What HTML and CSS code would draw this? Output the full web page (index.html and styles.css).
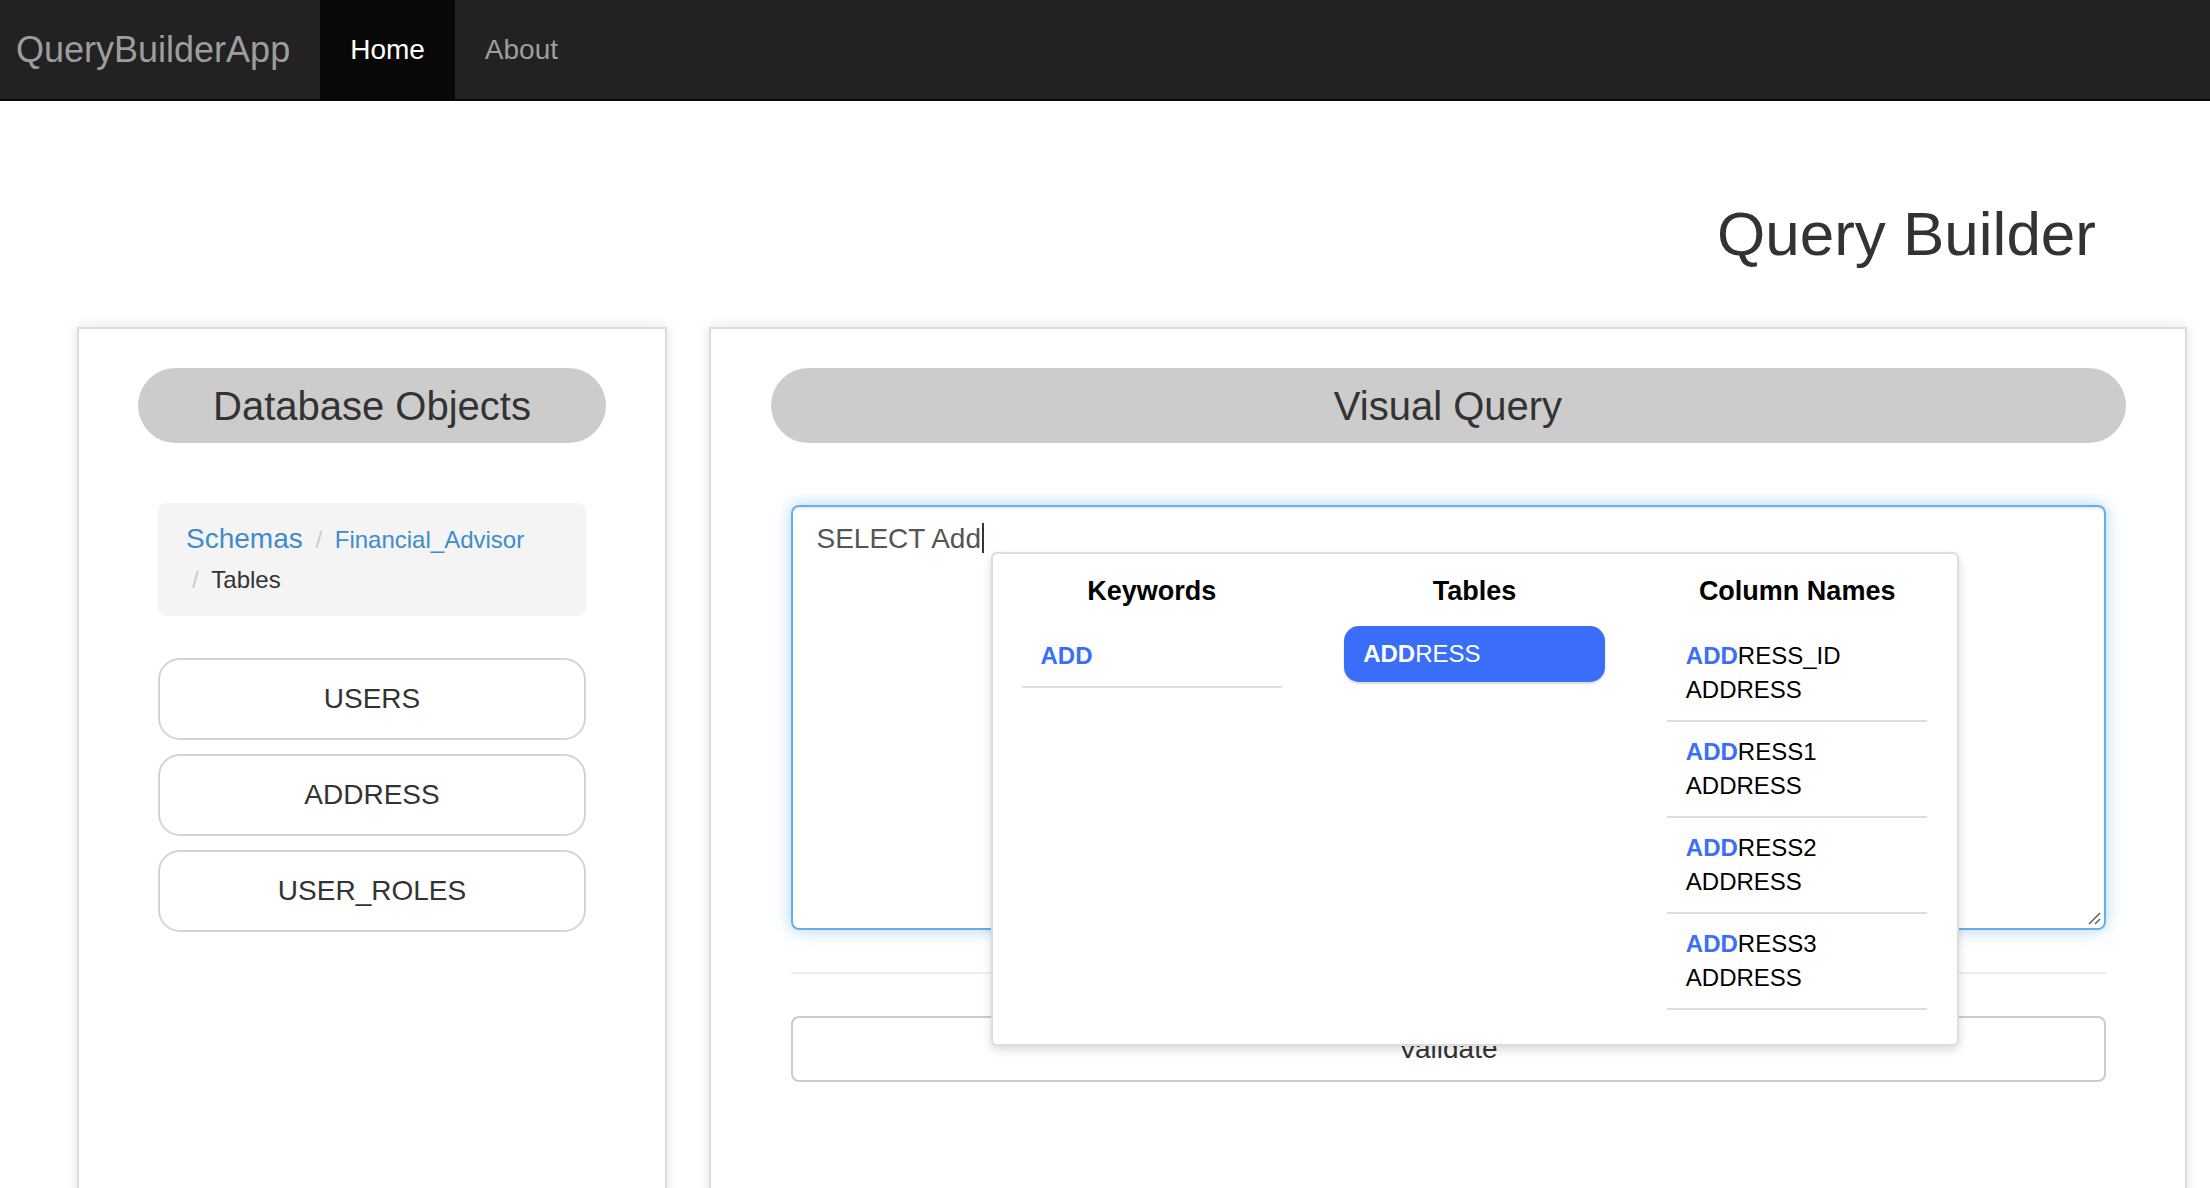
FILE: index.html
```html
<!DOCTYPE html>
<html lang="en">
<head>
<meta charset="utf-8">
<title>QueryBuilderApp</title>
<link rel="stylesheet" href="styles.css">
</head>
<body>
<nav class="navbar">
  <a class="brand">QueryBuilderApp</a>
  <a class="nav-link active">Home</a>
  <a class="nav-link">About</a>
</nav>

<header class="title-row">
  <h1 class="page-title">Query Builder</h1>
</header>

<main class="panels">
  <section class="panel panel-left">
    <div class="pill-title">Database Objects</div>
    <ol class="breadcrumb">
      <li class="crumb crumb-big"><a>Schemas</a></li>
      <li class="crumb"><a>Financial_Advisor</a></li>
      <li class="crumb active">Tables</li>
    </ol>
    <div class="table-list">
      <button class="table-btn">USERS</button>
      <button class="table-btn">ADDRESS</button>
      <button class="table-btn">USER_ROLES</button>
    </div>
  </section>

  <section class="panel panel-right">
    <div class="pill-title">Visual Query</div>
    <div class="editor-wrap">
      <div class="editor">SELECT Add<span class="caret"></span>
        <svg class="grip" width="14" height="14" viewBox="0 0 14 14"><path d="M2 13 L13 2 M8 13 L13 8" stroke="#666" stroke-width="1.6" fill="none"/></svg>
      </div>
      <div class="suggest">
        <div class="suggest-col">
          <div class="suggest-head">Keywords</div>
          <div class="item"><span class="hl">ADD</span></div>
        </div>
        <div class="suggest-col">
          <div class="suggest-head">Tables</div>
          <div class="item item-active"><b>ADD</b>RESS</div>
        </div>
        <div class="suggest-col">
          <div class="suggest-head">Column Names</div>
          <div class="item"><div><span class="hl">ADD</span>RESS_ID</div><div>ADDRESS</div></div>
          <div class="item"><div><span class="hl">ADD</span>RESS1</div><div>ADDRESS</div></div>
          <div class="item"><div><span class="hl">ADD</span>RESS2</div><div>ADDRESS</div></div>
          <div class="item"><div><span class="hl">ADD</span>RESS3</div><div>ADDRESS</div></div>
        </div>
      </div>
    </div>
    <hr class="divider">
    <button class="validate-btn">Validate</button>
  </section>
</main>
</body>
</html>
```

FILE: styles.css
```css
html, body {
  margin: 0;
  padding: 0;
  overflow: hidden;
  background: #fff;
}
body {
  font-family: "Liberation Sans", Arial, Helvetica, sans-serif;
  color: #333;
  font-size: 28px;
}

.navbar {
  display: flex;
  height: 99px;
  background: #222;
  border-bottom: 2px solid #080808;
}
.brand {
  padding: 0 30px 0 16px;
  line-height: 99px;
  font-size: 36px;
  color: #9d9d9d;
}
.nav-link {
  padding: 0 30px;
  line-height: 99px;
  font-size: 28px;
  color: #9d9d9d;
}
.nav-link.active {
  background: #080808;
  color: #fff;
}

.title-row {
  display: flex;
  justify-content: flex-end;
  padding-right: 114px;
}
.page-title {
  margin: 99px 0 0 0;
  font-size: 62px;
  line-height: 68px;
  font-weight: 400;
  color: #333;
}

.panels {
  display: flex;
  gap: 42px;
  padding-left: 77px;
  margin-top: 59px;
}
.panel {
  box-sizing: border-box;
  border: 2px solid #ddd;
  box-shadow: 0 0 12px rgba(0, 0, 0, 0.12);
  background: #fff;
  min-height: 1000px;
  padding-top: 39px;
  display: flex;
  flex-direction: column;
  align-items: center;
}
.panel-left { width: 590px; }
.panel-right { width: 1478px; }

.pill-title {
  box-sizing: border-box;
  height: 75px;
  line-height: 76px;
  background: #ccc;
  border-radius: 38px;
  text-align: center;
  font-size: 40px;
  color: #333;
}
.panel-left .pill-title { width: 468px; }
.panel-right .pill-title { width: 1355px; }

.breadcrumb {
  box-sizing: border-box;
  width: 428px;
  margin: 60px 0 0 0;
  padding: 16px 30px 16px 28px;
  list-style: none;
  background: #f4f4f4;
  border-radius: 8px;
  line-height: 40px;
  font-size: 24px;
}
.crumb { display: inline-block; }
.crumb a { color: #428bca; }
.crumb-big a { font-size: 28px; }
.crumb + .crumb::before {
  content: "/\00a0";
  padding: 0 6px;
  color: #ccc;
}
.crumb.active { color: #333; }

.table-list {
  margin-top: 42px;
  display: flex;
  flex-direction: column;
  gap: 14px;
}
.table-btn {
  box-sizing: border-box;
  width: 428px;
  height: 82px;
  background: #fff;
  border: 2px solid #d4d4d4;
  border-radius: 22px;
  font-family: inherit;
  font-size: 28px;
  color: #333;
}

.editor-wrap {
  position: relative;
  margin-top: 62px;
}
.editor {
  position: relative;
  box-sizing: border-box;
  width: 1315px;
  height: 425px;
  padding: 12px 24px;
  border: 2px solid #66afe9;
  border-radius: 8px;
  line-height: 40px;
  font-size: 28px;
  color: #555;
  box-shadow: inset 0 2px 2px rgba(0, 0, 0, 0.075), 0 0 16px rgba(102, 175, 233, 0.55);
}
.caret {
  display: inline-block;
  width: 2px;
  height: 30px;
  background: #333;
  vertical-align: -5px;
  margin-left: 1px;
}
.grip {
  position: absolute;
  right: 3px;
  bottom: 3px;
}

.suggest {
  position: absolute;
  left: 200px;
  top: 47px;
  box-sizing: border-box;
  width: 968px;
  height: 494px;
  padding: 17px 29px 0;
  background: #fff;
  border: 2px solid #ddd;
  border-radius: 6px;
  box-shadow: 0 4px 10px rgba(0, 0, 0, 0.15);
  display: grid;
  grid-template-columns: 1fr 1fr 1fr;
  column-gap: 62px;
  align-items: start;
  color: #000;
}
.suggest-head {
  height: 40px;
  line-height: 40px;
  margin-bottom: 15px;
  text-align: center;
  font-size: 27px;
  font-weight: 700;
}
.item {
  padding: 13px 19px;
  line-height: 34px;
  font-size: 24px;
  border-bottom: 2px solid #ddd;
}
.item-active {
  margin-top: 5px;
  padding: 11px 19px;
  border-bottom: none;
  border-radius: 15px;
  background: #3b6ef8;
  color: #fff;
  box-shadow: 0 2px 2px rgba(0, 0, 0, 0.15);
}
.hl {
  color: #3b6ef8;
  font-weight: 700;
}

.divider {
  width: 1315px;
  margin: 42px 0 0 0;
  border: 0;
  border-top: 2px solid #eee;
}
.validate-btn {
  box-sizing: border-box;
  width: 1315px;
  height: 66px;
  margin-top: 42px;
  background: #fff;
  border: 2px solid #ccc;
  border-radius: 8px;
  font-family: inherit;
  font-size: 28px;
  color: #333;
}
```
